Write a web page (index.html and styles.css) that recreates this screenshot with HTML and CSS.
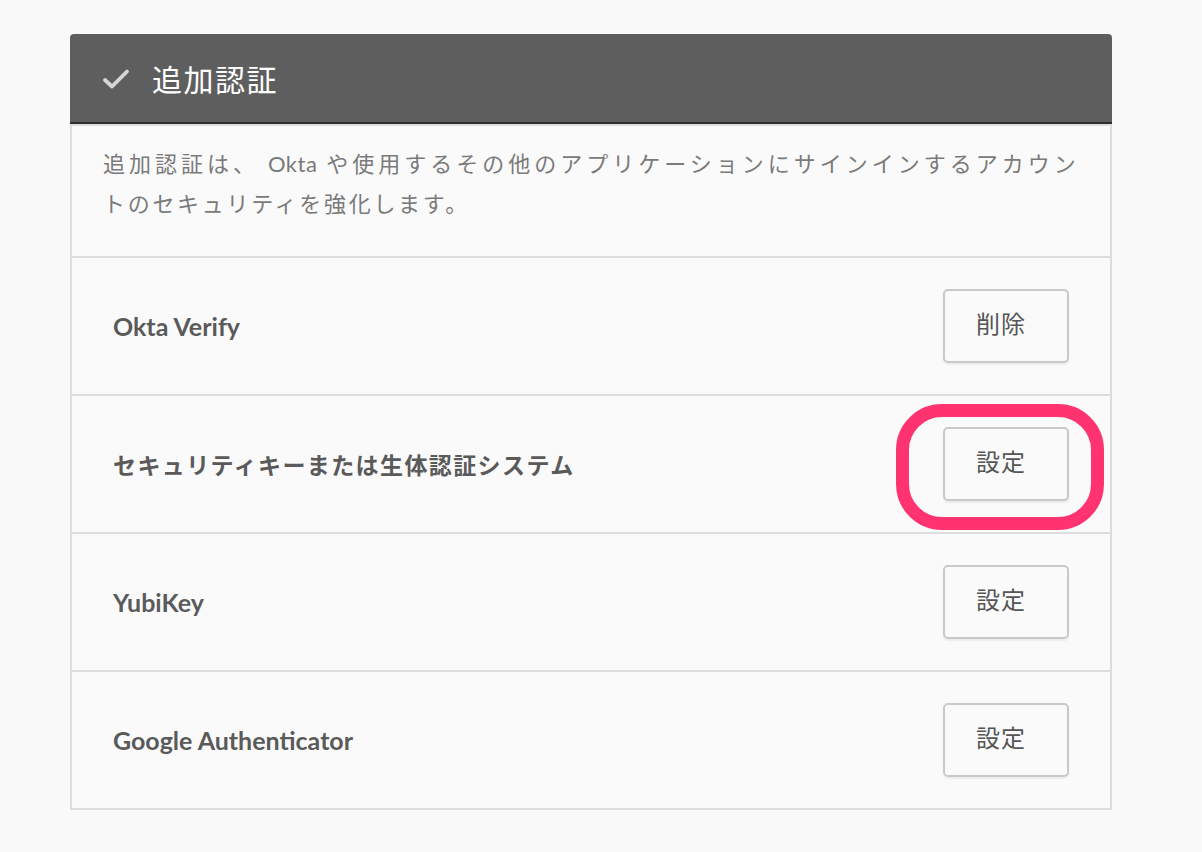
FILE: index.html
```html
<!DOCTYPE html>
<html lang="ja">
<head>
<meta charset="utf-8">
<title>追加認証</title>
<link rel="stylesheet" href="styles.css">
</head>
<body>
<section class="panel">
  <header class="panel-head">
    <svg class="check" width="28" height="22" viewBox="0 0 28 22"><path d="M3 12 L10 18.5 L25 3.5" fill="none" stroke="#d6d6d6" stroke-width="3.8" stroke-linecap="round" stroke-linejoin="round"/></svg>
    <h1 class="title">追加認証</h1>
  </header>
  <div class="panel-body">
    <p class="desc"><span class="line-1">追加認証は、 <span class="latin">Okta</span> や使用するその他のアプリケーションにサインインするアカウン</span><br>トのセキュリティを強化します。</p>
    <div class="row">
      <span class="label">Okta Verify</span>
      <div class="btn-wrap"><button class="btn">削除</button></div>
    </div>
    <div class="row">
      <span class="label jp">セキュリティキーまたは生体認証システム</span>
      <div class="btn-wrap"><button class="btn">設定</button><span class="ring"></span></div>
    </div>
    <div class="row">
      <span class="label">YubiKey</span>
      <div class="btn-wrap"><button class="btn">設定</button></div>
    </div>
    <div class="row last">
      <span class="label">Google Authenticator</span>
      <div class="btn-wrap"><button class="btn">設定</button></div>
    </div>
  </div>
</section>
</body>
</html>
```
FILE: styles.css
```css
html, body {
  margin: 0;
  padding: 0;
  background: #f9f9f9;
}
body {
  font-family: Lato, "Noto Sans CJK JP", sans-serif;
  padding: 34px 0 0 70px;
}
.panel {
  width: 1042px;
}
.panel-head {
  height: 88px;
  background: #5e5e5e;
  border-radius: 4px 4px 0 0;
  border-bottom: 2px solid #2e2e2e;
  display: flex;
  align-items: center;
  padding-left: 32px;
  box-sizing: content-box;
}
.check {
  display: block;
  margin-top: 2px;
}
.title {
  margin: 0 0 0 22px;
  font-family: "Noto Sans CJK JP", sans-serif;
  font-weight: 400;
  font-size: 30px;
  letter-spacing: 1.5px;
  color: #ffffff;
  line-height: 1;
}
.panel-body {
  background: #fafafa;
  border: 2px solid #dddddd;
}
.desc {
  margin: 0;
  padding: 17px 0 35px 31px;
  font-family: "Noto Sans CJK JP", sans-serif;
  font-size: 22px;
  letter-spacing: 2.7px;
  line-height: 38px;
  color: #7a7a7a;
  border-bottom: 2px solid #dddddd;
  white-space: nowrap;
}
.line-1 {
  letter-spacing: 4px;
}
.latin {
  font-family: Lato, sans-serif;
  letter-spacing: 0.5px;
}
.row {
  height: 136px;
  display: flex;
  align-items: center;
  justify-content: space-between;
  padding: 0 41px 0 41px;
  border-bottom: 2px solid #dddddd;
}
.row.last {
  border-bottom: none;
}
.label {
  font-family: Lato, "Noto Sans CJK JP", sans-serif;
  font-weight: 700;
  font-size: 25px;
  color: #5a5a5a;
}
.label.jp {
  font-family: "Noto Sans CJK JP", sans-serif;
  font-size: 23px;
  letter-spacing: 1.4px;
}
.btn-wrap {
  position: relative;
}
.btn {
  display: block;
  width: 126px;
  height: 74px;
  background: #fafafa;
  border: 2px solid #c9c9c9;
  border-radius: 5px;
  box-shadow: 0 2px 2px rgba(0,0,0,0.06);
  font-family: "Noto Sans CJK JP", sans-serif;
  font-size: 24px;
  letter-spacing: 1px;
  color: #555555;
  padding: 0 10px 8px 0;
}
.ring {
  position: absolute;
  left: -47px;
  top: -23px;
  width: 208px;
  height: 126px;
  box-sizing: border-box;
  border: 13px solid #ff3370;
  border-radius: 46px;
  pointer-events: none;
}
```
